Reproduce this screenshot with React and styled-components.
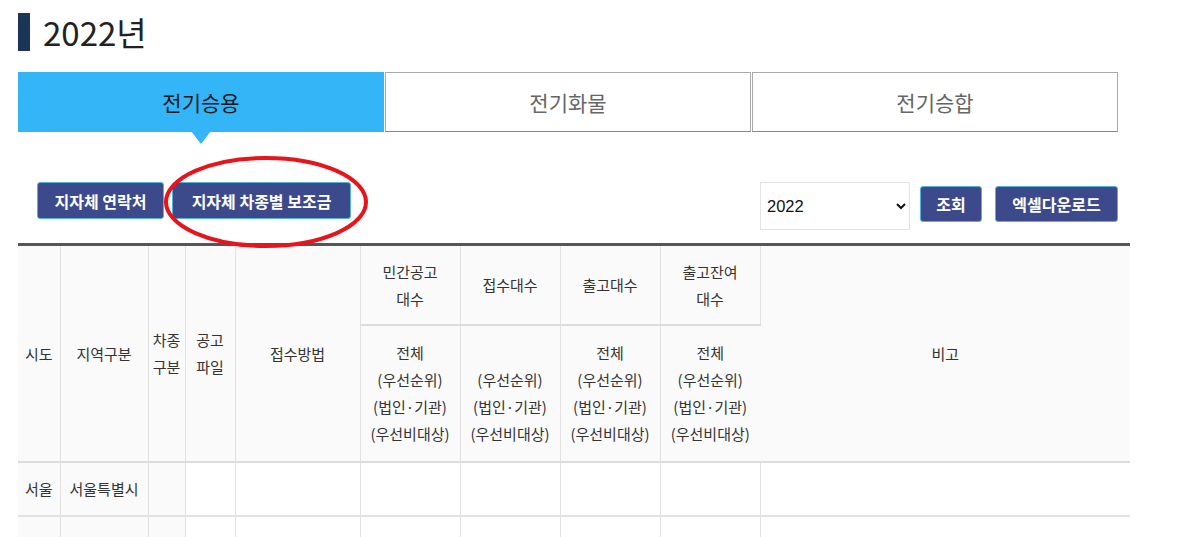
import React from 'react';
import styled, { createGlobalStyle } from 'styled-components';

const GlobalStyle = createGlobalStyle`
    body {
        margin: 0;
        background: #fff;
        font-family: "Noto Sans CJK KR", "Noto Sans", sans-serif;
        color: #333;
    }
`;

const columns = [42, 88, 37, 50, 125, 100, 100, 100, 100, 370];

const counts = [
    { head: ['민간공고', '대수'], body: ['전체', '(우선순위)', '(법인·기관)', '(우선비대상)'] },
    { head: ['접수대수'], body: ['', '(우선순위)', '(법인·기관)', '(우선비대상)'] },
    { head: ['출고대수'], body: ['전체', '(우선순위)', '(법인·기관)', '(우선비대상)'] },
    { head: ['출고잔여', '대수'], body: ['전체', '(우선순위)', '(법인·기관)', '(우선비대상)'] },
];

const App = () => {
    return (
        <Page>
            <GlobalStyle />
            <Title>2022년</Title>

            <Tabs>
                <Tab $active>전기승용</Tab>
                <Tab>전기화물</Tab>
                <Tab>전기승합</Tab>
            </Tabs>

            <Toolbar>
                <LeftGroup>
                    <Button $w={127}>지자체 연락처</Button>
                    <Marked>
                        <Button $w={179}>지자체 차종별 보조금</Button>
                        <Circle width="206" height="94" viewBox="0 0 206 94">
                            <ellipse cx="103" cy="47" rx="100" ry="44" fill="none" stroke="#e8141c" strokeWidth="4" />
                        </Circle>
                    </Marked>
                </LeftGroup>
                <RightGroup>
                    <YearSelect defaultValue="2022">
                        <option value="2022">2022</option>
                        <option value="2021">2021</option>
                        <option value="2020">2020</option>
                    </YearSelect>
                    <Button $small $w={62}>조회</Button>
                    <Button $small $w={123}>엑셀다운로드</Button>
                </RightGroup>
            </Toolbar>

            <Table>
                <colgroup>
                    {columns.map((w, i) => <col key={i} style={{ width: w }} />)}
                </colgroup>
                <thead>
                    <HeadRow $h={80}>
                        <Th rowSpan={2}>시도</Th>
                        <Th rowSpan={2}>지역구분</Th>
                        <Th rowSpan={2}>차종<br />구분</Th>
                        <Th rowSpan={2}>공고<br />파일</Th>
                        <Th rowSpan={2}>접수방법</Th>
                        {counts.map((c, i) => (
                            <Th key={i}>{c.head.map((t, j) => <Line key={j}>{t}</Line>)}</Th>
                        ))}
                        <Th rowSpan={2}>비고</Th>
                    </HeadRow>
                    <HeadRow $h={137}>
                        {counts.map((c, i) => (
                            <Th key={i} $divided>
                                {c.body.map((t, j) => <Line key={j}>{t || '\u00a0'}</Line>)}
                            </Th>
                        ))}
                    </HeadRow>
                </thead>
                <tbody>
                    <BodyRow>
                        <Td $shaded>서울</Td>
                        <Td $shaded>서울특별시</Td>
                        <Td $shaded></Td>
                        <Td></Td>
                        <Td></Td>
                        <Td></Td>
                        <Td></Td>
                        <Td></Td>
                        <Td></Td>
                        <Td></Td>
                    </BodyRow>
                    <BodyRow>
                        <Td $shaded></Td>
                        <Td $shaded></Td>
                        <Td $shaded></Td>
                        <Td></Td>
                        <Td></Td>
                        <Td></Td>
                        <Td></Td>
                        <Td></Td>
                        <Td></Td>
                        <Td></Td>
                    </BodyRow>
                </tbody>
            </Table>
        </Page>
    );
};

export default App;

const Page = styled.div`
    width: 1112px;
    padding: 13px 0 0 18px;
`;

const Title = styled.h1`
    display: flex;
    align-items: center;
    gap: 13px;
    margin: 0;
    height: 38px;
    font-family: "Noto Sans CJK KR", sans-serif;
    font-size: 33px;
    font-weight: 400;
    color: #222;
    line-height: 38px;

    &::before {
        content: '';
        display: block;
        width: 12px;
        height: 38px;
        background: #1b3558;
    }
`;

const Tabs = styled.div`
    display: flex;
    gap: 1px;
    width: 1100px;
    margin-top: 21px;
`;

const Tab = styled.div`
    position: relative;
    flex: 1;
    height: 60px;
    box-sizing: border-box;
    display: flex;
    align-items: center;
    justify-content: center;
    font-size: 21px;
    color: ${p => (p.$active ? '#1a1a1a' : '#666')};
    background: ${p => (p.$active ? '#33b5f7' : '#fff')};
    border: 1px solid ${p => (p.$active ? '#33b5f7' : '#aaa')};
    border-bottom-color: ${p => (p.$active ? '#33b5f7' : '#888')};

    &::after {
        content: '';
        display: ${p => (p.$active ? 'block' : 'none')};
        position: absolute;
        left: 50%;
        bottom: -13px;
        margin-left: -10px;
        border-left: 10px solid transparent;
        border-right: 10px solid transparent;
        border-top: 13px solid #33b5f7;
    }
`;

const Toolbar = styled.div`
    display: flex;
    justify-content: space-between;
    align-items: flex-start;
    width: 1100px;
    margin-top: 50px;
`;

const LeftGroup = styled.div`
    display: flex;
    gap: 8px;
    padding-left: 19px;
`;

const RightGroup = styled.div`
    display: flex;
    align-items: flex-start;
    gap: 10px;

    & > button:last-child {
        margin-left: 3px;
    }
`;

const Marked = styled.div`
    position: relative;
`;

const Circle = styled.svg`
    position: absolute;
    left: -9px;
    top: -27px;
    pointer-events: none;
`;

const Button = styled.button`
    width: ${p => p.$w}px;
    height: ${p => (p.$small ? '36px' : '37px')};
    margin-top: ${p => (p.$small ? '4px' : '0')};
    padding: 0;
    background: #3c4a8b;
    color: #fff;
    border: 1px solid #52b4dc;
    border-radius: 3px;
    font-family: "Noto Sans CJK KR", sans-serif;
    font-size: 16px;
    font-weight: 700;
    white-space: nowrap;
    cursor: pointer;
`;

const YearSelect = styled.select`
    width: 150px;
    height: 48px;
    padding: 0 8px 0 2px;
    border: 1px solid #e3e3e3;
    background: #fff;
    font-family: "Liberation Sans", Arial, sans-serif;
    font-size: 16.5px;
    color: #111;
    outline: none;
`;

const Table = styled.table`
    width: 1112px;
    margin-top: 13px;
    border-collapse: collapse;
    table-layout: fixed;
    border-top: 3px solid #555;
    font-size: 15px;
`;

const HeadRow = styled.tr`
    height: ${p => p.$h}px;
`;

const Th = styled.th`
    padding: 0;
    background: #fafafa;
    font-weight: 400;
    color: #333;
    line-height: 27px;
    text-align: center;
    vertical-align: middle;
    border-right: 1px solid #e2e2e2;
    border-bottom: 2px solid #dcdcdc;
    border-top: ${p => (p.$divided ? '2px solid #dcdcdc' : '0')};

    &:last-child {
        border-right: 0;
    }
`;

const Line = styled.div`
    white-space: nowrap;
`;

const BodyRow = styled.tr`
    height: 54px;
`;

const Td = styled.td`
    padding: 0;
    text-align: center;
    color: #333;
    font-size: 15px;
    background: ${p => (p.$shaded ? '#fafafa' : '#fff')};
    border-right: 1px solid #e2e2e2;
    border-bottom: 2px solid #e2e2e2;

    &:last-child {
        border-right: 0;
    }
`;
